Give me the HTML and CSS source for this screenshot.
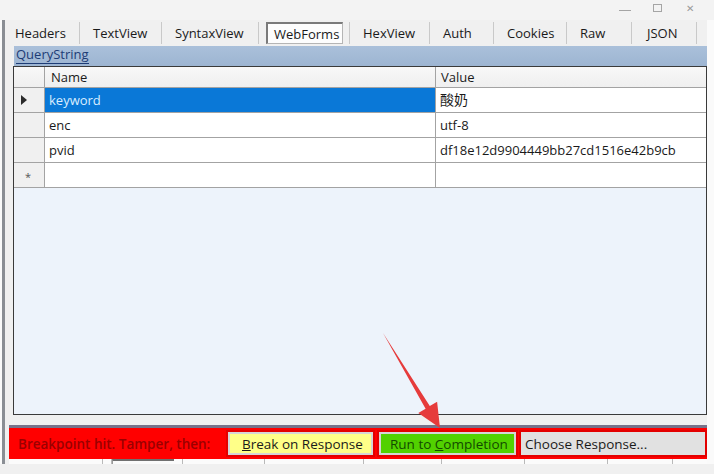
FILE: index.html
```html
<!DOCTYPE html>
<html lang="en">
<head>
  <meta charset="UTF-8">
  <meta name="viewport" content="width=device-width, initial-scale=1.0">
  <title>WebForms</title>
  <link rel="stylesheet" href="styles.css">
</head>
<body>
  <div class="titlebar">
    <span class="ctl ctl-min"></span>
    <span class="ctl ctl-max"></span>
    <span class="ctl ctl-close">&#x2715;</span>
  </div>

  <div class="window">
    <div class="edge"></div>
    <div class="main">
      <div class="tabs">
        <div class="tab"><span>Headers</span></div>
        <div class="tab"><span>TextView</span></div>
        <div class="tab"><span>SyntaxView</span></div>
        <div class="tab on"><span>WebForms</span></div>
        <div class="tab"><span>HexView</span></div>
        <div class="tab"><span>Auth</span></div>
        <div class="tab"><span>Cookies</span></div>
        <div class="tab"><span>Raw</span></div>
        <div class="tab"><span>JSON</span></div>
      </div>

      <div class="pane">
        <div class="qs"><span>QueryString</span></div>
        <div class="table">
          <div class="rh hd"></div>
          <div class="cell hd">Name</div>
          <div class="cell hd">Value</div>

          <div class="rh"><svg width="8" height="10" viewBox="0 0 8 10"><polygon points="1,0 7,5 1,10" fill="#2b2b2b"/></svg></div>
          <div class="cell sel">keyword</div>
          <div class="cell cjk">酸奶</div>

          <div class="rh"></div>
          <div class="cell">enc</div>
          <div class="cell">utf-8</div>

          <div class="rh"></div>
          <div class="cell">pvid</div>
          <div class="cell">df18e12d9904449bb27cd1516e42b9cb</div>

          <div class="rh star">*</div>
          <div class="cell"></div>
          <div class="cell"></div>
        </div>
      </div>

      <div class="gap"></div>
      <div class="sep"></div>

      <div class="strip">
        <span class="msg">Breakpoint hit. Tamper, then:</span>
        <div class="btn btn-yellow"><span><u>B</u>reak on Response</span></div>
        <div class="btn btn-green"><span>Run to <u>C</u>ompletion</span></div>
        <div class="btn btn-choose"><span>Choose Response...</span></div>
      </div>

      <div class="ticks">
        <i></i><i></i><i class="box"></i><i></i><i></i><i></i><i></i><i></i><i></i><i></i>
      </div>
    </div>
  </div>

  <svg class="arrow" width="714" height="474" viewBox="0 0 714 474">
    <polygon points="383,333 429.8,406.1 437.1,401.7 440,428 418.3,413.1 425.6,408.7" fill="#e63b3b"/>
  </svg>
</body>
</html>
```

FILE: styles.css
```css
*{margin: 0;padding: 0;box-sizing: border-box;}
body {
  width: 714px;
  height: 474px;
  overflow: hidden;
  position: relative;
  background: #f0f0f0;
  font-family: "Open Sans", "Noto Sans CJK SC", sans-serif;
  font-size: 13px;
  color: #1a1a1a;
}

/* window title bar */
.titlebar {
  height: 20px;
  background: #f3f3f3;
  display: flex;
  justify-content: flex-end;
  align-items: center;
  padding-right: 18px;
}
.ctl {
  width: 12px;
  height: 12px;
  margin-left: 22px;
  color: #9a9a9a;
  font-size: 10px;
  line-height: 12px;
  text-align: center;
  display: inline-block;
}
.ctl-min {border-bottom: 1px solid #a5a5a5; height: 7px; margin-top: -5px;}
.ctl-max {width: 9px; height: 8px; border: 1px solid #a5a5a5; margin-top: -4px;}
.ctl-close {margin-top: -4px;}

.window {
  display: flex;
  height: 444px;
  background: #fafafa;
}
.edge {
  width: 3px;
  margin-left: 2px;
  background: #8a8e94;
}
.main {
  width: 702px;
  padding-left: 4px;
  background: #f0f0f0;
  display: flex;
  flex-direction: column;
}

/* tabs */
.tabs {
  height: 26px;
  display: flex;
  align-items: stretch;
}
.tab {
  border-right: 1px solid #c9c9c9;
  margin: 2px 0 2px 0;
  padding-left: 13px;
  display: flex;
  align-items: center;
}
.tab span {line-height: 20px;}
.tab:nth-child(1) {width: 71px; padding-left: 6px;}
.tab:nth-child(2) {width: 82px;}
.tab:nth-child(3) {width: 97px;}
.tab:nth-child(4) {width: 91px; padding-left: 7px;}
.tab:nth-child(5) {width: 80px;}
.tab:nth-child(6) {width: 64px;}
.tab:nth-child(7) {width: 73px;}
.tab:nth-child(8) {width: 65px;}
.tab:nth-child(9) {width: 65px; padding-left: 15px;}
.tab.on span {
  width: 77px;
  height: 22px;
  padding-left: 6px;
  background: #fdfdfd;
  border: 1px solid #b5b5b5;
  border-top: 2px solid #7a7a7a;
  border-left: 2px solid #7a7a7a;
}

/* query string pane */
.pane {
  padding-left: 4px;
}
.qs {
  height: 20px;
  margin-left: 1px;
  background: linear-gradient(#aac0da, #9db5d2);
  font-size: 13px;
  line-height: 16px;
  padding-left: 2px;
  color: #1d3c76;
}
.qs span {border-bottom: 1px solid #1d3c76;}

.table {
  height: 349px;
  border: 1px solid #3a3a3a;
  background: #edf3fb;
  display: grid;
  grid-template-columns: 31px 391px 1fr;
  grid-template-rows: 21px;
  grid-auto-rows: 25px;
  align-content: start;
}
.rh {
  background: #f0f0f0;
  border-right: 1px solid #a3a3a3;
  border-bottom: 1px solid #a3a3a3;
  display: flex;
  align-items: center;
  padding-left: 6px;
}
.star {font-size: 11px; color: #555; padding-left: 11px; padding-top: 2px;}
.cell {
  background: #fff;
  border-right: 1px solid #a3a3a3;
  border-bottom: 1px solid #a3a3a3;
  padding-left: 4px;
  line-height: 24px;
  white-space: nowrap;
}
.cell:nth-child(3n) {border-right: none;}
.hd {
  background: linear-gradient(#f8f8f8, #efefef);
  line-height: 20px;
}
.cell.hd {padding-left: 6px;}
.cell.hd:nth-child(3) {padding-left: 5px;}
.sel {
  background: #0a78d7;
  color: #d9eeff;
}
.cjk {font-size: 14px;}

/* breakpoint bar */
.gap {height: 10px;}
.sep {height: 3px; background: #77738a;}
.strip {
  height: 31px;
  background: #ff0000;
  display: flex;
  align-items: center;
  padding-left: 9px;
}
.msg {
  width: 208px;
  flex-shrink: 0;
  color: #9a0000;
  font-weight: 600;
  font-size: 13.5px;
  white-space: nowrap;
}
.btn {
  height: 27px;
  flex-shrink: 0;
  border: 2px solid #e30000;
  box-shadow: inset 0 0 0 2px #d6d6d6;
  display: flex;
  align-items: center;
  font-size: 13.5px;
  color: #1a1a1a;
  white-space: nowrap;
}
.btn-yellow {
  width: 149px;
  background: #ffff88;
  padding-left: 14px;
}
.btn-green {
  width: 141px;
  margin-left: 2px;
  background: #52d100;
  color: #134a00;
  padding-left: 11px;
}
.btn-choose {
  flex: 1;
  margin-left: 1px;
  background: #e1e1e1;
  box-shadow: none;
  padding-left: 4px;
}

.ticks {
  height: 5px;
  background: #fbfbfb;
  display: flex;
}
.ticks i {
  width: 1px;
  height: 5px;
  background: #b9b9b9;
}
.ticks i:nth-child(1) {margin-left: 93px;}
.ticks i:nth-child(2) {margin-left: 8px;}
.ticks i.box {width: 62px; border-top: 2px solid #707070; background: none; border-left: 1px solid #999;}
.ticks i:nth-child(4) {margin-left: 8px;}
.ticks i:nth-child(5) {margin-left: 81px;}
.ticks i:nth-child(6) {margin-left: 98px;}
.ticks i:nth-child(7) {margin-left: 77px;}
.ticks i:nth-child(8) {margin-left: 82px;}
.ticks i:nth-child(9) {margin-left: 82px;}
.ticks i:nth-child(10) {margin-left: 64px;}

/* annotation */
.arrow {
  position: absolute;
  top: 0;
  left: 0;
  pointer-events: none;
}
```
